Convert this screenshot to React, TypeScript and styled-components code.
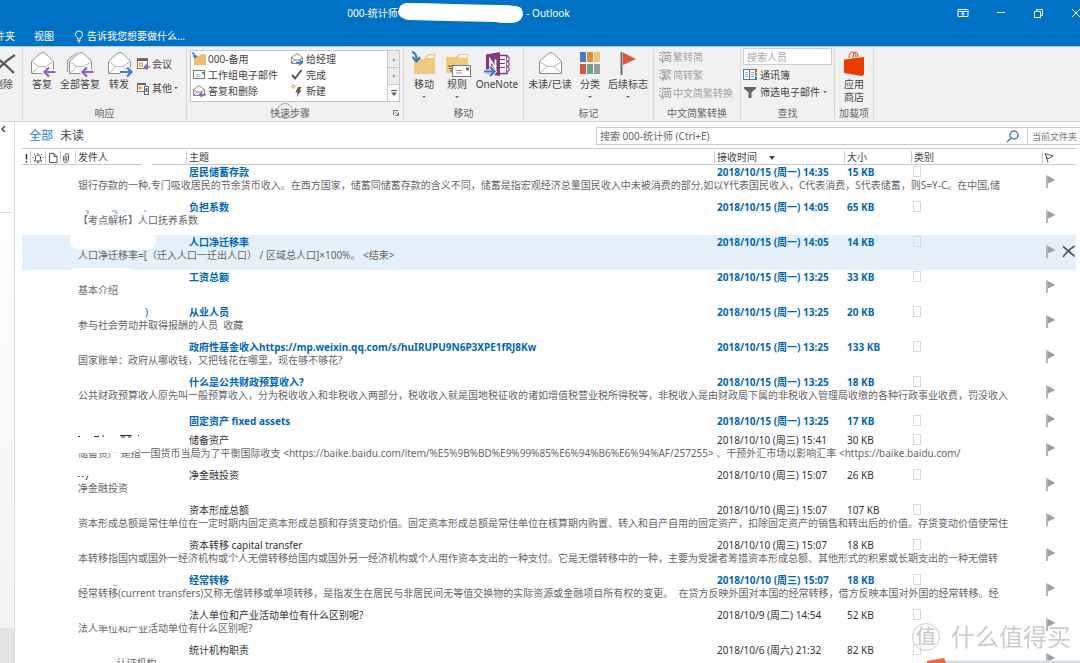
import React from "react";
import styled, { createGlobalStyle, css } from "styled-components";

const blue = "#0072c6";
const purple = "#9262b8";
const arrowBlue = "#3d7dbd";
const line = "#c6c9d1";
const ink = "#444444";

const GlobalStyle = createGlobalStyle`
  * { box-sizing: border-box; }
  html, body, #root { height: 100%; }
  body {
    margin: 0;
    overflow: hidden;
    background: #ffffff;
    color: ${ink};
    font-family: "Noto Sans", "Noto Sans CJK SC", sans-serif;
    font-size: 10px;
    line-height: 13px;
    text-spacing-trim: space-all;
  }
  button, input, select {
    font: inherit;
    color: inherit;
    border: 0;
    padding: 0;
    margin: 0;
    background: none;
    border-radius: 0;
  }
  svg { display: block; flex: none; }
`;

/* ---------- window frame ---------- */

const Window = styled.div`
  height: 100vh;
  display: flex;
  flex-direction: column;
  overflow: hidden;
`;

const TitleBar = styled.header`
  display: flex;
  flex: none;
  height: 26px;
  background: ${blue};
  color: #ffffff;
`;

const Title = styled.h1`
  flex: 1;
  display: flex;
  align-items: center;
  justify-content: center;
  margin: 0;
  font-size: 10px;
  font-weight: 400;
  white-space: pre;
`;

const WindowControls = styled.div`
  display: flex;
  width: 163px;
  padding-left: 27px;
  overflow: hidden;
`;

const WindowButton = styled.button`
  flex: none;
  width: 38px;
  display: flex;
  align-items: center;
  justify-content: center;
`;

const TabBar = styled.nav`
  display: flex;
  flex: none;
  align-items: center;
  height: 21px;
  background: ${blue};
  color: #ffffff;
  border-bottom: 1px solid #a9cdea;
`;

const RibbonTab = styled.button<{ $width: number }>`
  display: flex;
  flex: none;
  width: ${(p) => p.$width}px;
  justify-content: flex-end;
  overflow: hidden;
  white-space: nowrap;
`;

const TellMe = styled.button`
  display: flex;
  align-items: center;
  gap: 3px;
  margin-left: 20px;
  white-space: nowrap;
`;

/* ---------- ribbon ---------- */

const Ribbon = styled.div`
  display: flex;
  flex: none;
  height: 75px;
  padding: 1px 0 1px;
  background: #f1f1f1;
  border-bottom: 1px solid #d5d5d5;
`;

const Group = styled.section<{ $width: number }>`
  display: flex;
  flex: none;
  flex-direction: column;
  width: ${(p) => p.$width}px;
  border-right: 1px solid #dadada;
  overflow: hidden;
`;

const GroupBody = styled.div<{ $end?: boolean; $pad?: number; $top?: number }>`
  display: flex;
  flex: 1;
  min-height: 0;
  padding: ${(p) => p.$top ?? 2}px 0 0 ${(p) => p.$pad ?? 3}px;
  ${(p) => p.$end && css`justify-content: flex-end; padding-right: 6px;`}
`;

const GroupLabel = styled.div`
  display: flex;
  flex: none;
  align-items: center;
  justify-content: center;
  height: 14px;
  color: #666666;
  white-space: nowrap;
`;

const Launcher = styled.button`
  padding-right: 4px;
`;

const LabelText = styled.span`
  position: relative;
  margin: 0 auto;
`;

const PointerRing = styled.span`
  position: absolute;
  left: 7px;
  top: -4px;
  width: 16px;
  height: 16px;
  border: 1px solid #a9a6b4;
  border-radius: 50%;
`;

const BigButton = styled.button<{ $width: number }>`
  display: flex;
  flex: none;
  flex-direction: column;
  align-items: center;
  justify-content: flex-start;
  width: ${(p) => p.$width}px;
  white-space: nowrap;
`;

const Caret = styled.span<{ $spaced?: boolean }>`
  width: 0;
  height: 0;
  border: 2px solid transparent;
  border-top-color: #666666;
  border-bottom: 0;
  ${(p) => p.$spaced && css`margin-top: 5px;`}
`;

const Stack = styled.div<{ $gap: number; $top: number }>`
  display: flex;
  flex-direction: column;
  align-items: flex-start;
  gap: ${(p) => p.$gap}px;
  padding-top: ${(p) => p.$top}px;
`;

const SmallButton = styled.button<{ $gap?: number }>`
  display: flex;
  align-items: center;
  gap: ${(p) => p.$gap ?? 2}px;
  height: 14px;
  white-space: nowrap;
  &:disabled { color: #a3a3a3; }
`;

const Gallery = styled.div`
  display: flex;
  width: 210px;
  height: 52px;
  background: #ffffff;
  border: 1px solid #c8c8c8;
`;

const GallerySteps = styled.div`
  flex: 1;
  display: grid;
  grid-template-columns: 98px 1fr;
  grid-auto-rows: 16px;
  padding: 1px 0 0 1px;
`;

const GalleryScroll = styled.div`
  display: flex;
  flex-direction: column;
  width: 12px;
  border-left: 1px solid #c8c8c8;
`;

const ScrollButton = styled.button<{ $active?: boolean }>`
  flex: 1;
  display: flex;
  align-items: center;
  justify-content: center;
  background: ${(p) => (p.$active ? "#ffffff" : "#ececec")};
  & + & { border-top: 1px solid #c8c8c8; }
`;

const PeopleSearch = styled.input`
  width: 89px;
  height: 17px;
  padding: 0 3px;
  background: #ffffff;
  border: 1px solid #cccccc;
  &::placeholder { color: #a6a6a6; opacity: 1; }
`;

/* ---------- body ---------- */

const Main = styled.main`
  display: flex;
  flex: 1;
  min-height: 0;
`;

const FolderRail = styled.aside`
  display: flex;
  flex: none;
  flex-direction: column;
  width: 15px;
  border-right: 1px solid #dcdcdc;
  background: linear-gradient(#ffffff, #f3f3f3);
`;

const RailTop = styled.div`
  height: 91px;
  margin-right: 3px;
  padding: 3px 0 0 1px;
  border-bottom: 1px solid #dcdcdc;
`;

const RailBottom = styled.div`
  height: 35px;
  margin-top: auto;
  background: #e3e3e3;
`;

const MessagePane = styled.section`
  flex: 1;
  min-width: 0;
  padding: 5px 0 0 7px;
`;

const PaneTop = styled.div`
  display: flex;
  height: 21px;
`;

const FilterButton = styled.button<{ $active?: boolean }>`
  margin-left: 7px;
  height: 18px;
  font-size: 12px;
  line-height: 18px;
  color: ${(p) => (p.$active ? "#1e82d2" : ink)};
`;

const SearchBox = styled.form`
  display: flex;
  align-items: center;
  width: 484px;
  height: 18px;
  margin-left: auto;
  border: 1px solid ${line};
  border-right: 0;
`;

const SearchInput = styled.input`
  flex: 1;
  min-width: 0;
  padding-left: 3px;
  &::placeholder { color: #666666; opacity: 1; }
`;

const SearchButton = styled.button`
  padding: 0 8px 0 4px;
`;

const ScopeSelect = styled.select`
  appearance: none;
  width: 53px;
  height: 16px;
  padding-left: 4px;
  border-left: 1px solid ${line};
  color: #777777;
  font-size: 9px;
`;

const Mail = styled.table`
  width: calc(100% - 4px);
  table-layout: fixed;
  border-collapse: separate;
  border-spacing: 0;
`;

const HeadCell = styled.th<{ $plain?: boolean; $left?: number }>`
  height: 17px;
  padding: 2px 0 0 ${(p) => p.$left ?? 1}px;
  border-top: 1px solid ${line};
  border-bottom: 1px solid ${line};
  text-align: left;
  font-weight: 400;
  white-space: nowrap;
  background: ${(p) =>
    p.$plain ? "none" : `linear-gradient(${line}, ${line}) right center / 1px 12px no-repeat`};
`;

const HeadInner = styled.span`
  display: flex;
  align-items: center;
  gap: 12px;
  height: 13px;
`;

const LineGap = styled.span`
  position: absolute;
  left: 64px;
  top: 12px;
  width: 10px;
  height: 3px;
  background: #ffffff;
`;

const HeadAnchor = styled.span`
  position: relative;
  display: block;
`;

const Message = styled.tbody<{ $unread?: boolean; $selected?: boolean }>`
  color: ${(p) => (p.$unread ? "#0067b5" : "#333333")};
  font-weight: ${(p) => (p.$unread ? 700 : 400)};
  background: ${(p) => (p.$selected ? "#e4f1fa" : "none")};
`;

const Cell = styled.td<{ $height?: number }>`
  height: ${(p) => p.$height ?? 14}px;
  padding: ${(p) => (p.$height ? 5 : 1)}px 0 0 2px;
  vertical-align: top;
  white-space: nowrap;
`;

const CategoryCell = styled(Cell)`
  padding: ${(p) => (p.$height ? 5 : 1)}px 0 0 1px;
`;

const PreviewCell = styled.td`
  height: 21px;
  padding: 0 0 0 2px;
  vertical-align: top;
  overflow: hidden;
  white-space: pre;
  color: #666666;
  font-weight: 400;
`;

const IconCell = styled.td<{ $left: number }>`
  padding: 0 0 2px ${(p) => p.$left}px;
  vertical-align: middle;
`;

const CategoryBox = styled.span`
  display: block;
  width: 8px;
  height: 11px;
  border: 1px solid #d9d9d9;
`;

const Anchor = styled.div`
  position: relative;
  height: 13px;
`;

const Smudge = styled.svg<{ $left: number; $top: number }>`
  position: absolute;
  left: ${(p) => p.$left}px;
  top: ${(p) => p.$top}px;
`;

const SenderTail = styled.div`
  padding-left: 67px;
  font-weight: 400;
`;

const Watermark = styled.div`
  position: fixed;
  right: 9px;
  bottom: 10px;
  display: flex;
  align-items: center;
  gap: 11px;
  color: rgba(190, 190, 190, 0.8);
  font-size: 24px;
  line-height: 32px;
  text-shadow: 1px 1px 1px rgba(255, 255, 255, 0.9);
  pointer-events: none;
`;

const WatermarkBadge = styled.span`
  width: 28px;
  height: 28px;
  border: 1px solid rgba(190, 190, 190, 0.8);
  border-radius: 50%;
  font-size: 20px;
  line-height: 25px;
  text-align: center;
  font-weight: 500;
`;

const Footing = styled.div`
  position: fixed;
  right: 0;
  bottom: 0;
  width: 153px;
`;

/* ---------- icons ---------- */

const Envelope = ({ double = false }: { double?: boolean }) => (
  <>
    {double && <path d="M1.5 22V10L11 2.5" fill="none" stroke="#999" />}
    <path d="M3.5 11.5 Q13 2 15 2.5 Q17 2 25.5 11.5V23.500H3.500Z" fill="#fff" stroke="#8d8d8d" />
    <path d="M3.500 11.500L11 16.500H18L25.500 11.500M3.500 23.500L11 16.500M18 16.500L25.500 23.500" fill="none" stroke="#b5b5b5" />
  </>
);

const ReplyIcon = ({ double = false }: { double?: boolean }) => (
  <svg width="28" height="28" viewBox="0 0 28 28">
    <Envelope double={double} />
    <path d="M27 22H17M20.500 17.500L16 22L20.500 26.500" fill="none" stroke="#f1f1f1" strokeWidth="5" />
    <path d="M27.500 22H17M21 17.500L16.500 22L21 26.500" fill="none" stroke={purple} strokeWidth="2.200" />
  </svg>
);

const ForwardIcon = () => (
  <svg width="28" height="28" viewBox="0 0 28 28">
    <Envelope />
    <path d="M15 22H26M22 17.500L26.500 22L22 26.500" fill="none" stroke="#f1f1f1" strokeWidth="5" />
    <path d="M15 22H26M22 17.500L26.500 22L22 26.500" fill="none" stroke={arrowBlue} strokeWidth="2.200" />
  </svg>
);

const ReadIcon = () => (
  <svg width="28" height="28" viewBox="0 0 28 28">
    <Envelope />
  </svg>
);

const DeleteBigIcon = () => (
  <svg width="28" height="28" viewBox="0 0 28 28">
    <path d="M5 6Q16 14 25 23M26 5Q14 12 5 24" fill="none" stroke="#5c5c5c" strokeWidth="2.400" />
  </svg>
);

const MoveIcon = () => (
  <svg width="28" height="28" viewBox="0 0 28 28">
    <path d="M4 9H14L17 5H25V24H4Z" fill="#efc982" />
    <path d="M16 8L18 4.500H25V7" fill="none" stroke="#efc982" />
    <path d="M17 8L18.500 5.500H24V8Z" fill="#fff" />
    <path d="M2 2Q7 3 6.500 11M2.500 7L6.500 11.500L10 7" fill="none" stroke={arrowBlue} strokeWidth="2.200" />
  </svg>
);

const RulesIcon = () => (
  <svg width="28" height="28" viewBox="0 0 28 28">
    <path d="M3 7H13L16 4H25V23H3Z" fill="#efc982" />
    <path d="M15.500 7L17.500 5H24V7.500H15.500Z" fill="#fff" />
    <path d="M5 16H9M6 18.500H9M7 21H9" stroke="#555" />
    <rect x="9.500" y="15.500" width="18" height="11" fill="#fff" stroke="#777" />
    <rect x="23" y="17.500" width="3" height="3" fill={arrowBlue} />
    <path d="M13 20.500H19M13 23H19" stroke="#999" />
  </svg>
);

const OneNoteIcon = () => (
  <svg width="28" height="28" viewBox="0 0 28 28">
    <rect x="15" y="5.500" width="9" height="18" fill="#fff" stroke="#80397b" strokeWidth="1.500" />
    <path d="M17 9.500H22M17 13.500H22M17 17.500H22" stroke="#80397b" />
    <path d="M24 7H26V11H24M24 12H26V16H24M24 17H26V21H24" fill="#fff" stroke="#80397b" />
    <path d="M3 4.500L17 2V26L3 23.500Z" fill="#80397b" />
    <path d="M7 18V9.500L12.500 18V9.500" fill="none" stroke="#fff" strokeWidth="1.800" />
    <path d="M1 21.500H11M7 17L11.500 21.500L7 26" fill="none" stroke="#f1f1f1" strokeWidth="4" />
    <path d="M1 21.500H11M7 17L11.500 21.500L7 26" fill="none" stroke={arrowBlue} strokeWidth="2.200" />
  </svg>
);

const CategorizeIcon = () => {
  const colors = ["#3f7fbd", "#e2893a", "#efc27a", "#d5573b", "#62a58b", "#9a9a9a"];
  return (
    <svg width="28" height="28" viewBox="0 0 28 28">
      {colors.map((c, i) => (
        <rect key={c} x={4 + (i % 3) * 7} y={i < 3 ? 2 : 14} width="6" height="10" fill={c} />
      ))}
    </svg>
  );
};

const FollowUpIcon = () => (
  <svg width="28" height="28" viewBox="0 0 28 28">
    <path d="M7.500 2V25" stroke="#6b6b6b" strokeWidth="2" />
    <path d="M9 2.500L22 9L9 15Z" fill="#d9573b" />
  </svg>
);

const StoreIcon = () => (
  <svg width="28" height="28" viewBox="0 0 28 28">
    <path d="M9 8Q9 2 13 2Q16 2 16 7M13 8Q13 3 15 2Q18 2 18 7" fill="none" stroke="#eb3c00" />
    <path d="M4 9.500L24 7V24.500L22 26L4 23Z" fill="#eb3c00" />
  </svg>
);

const MeetingIcon = () => (
  <svg width="14" height="14" viewBox="0 0 14 14">
    <rect x="1.500" y="1.500" width="10" height="10" fill="#fff" stroke="#777" />
    <path d="M1 3H12" stroke="#666" strokeWidth="2" />
    <rect x="3.500" y="6" width="3" height="3" fill="none" stroke="#e8833a" />
    <path d="M14 10H8.500M11 7.500L8.500 10L11 12.500" fill="none" stroke={purple} strokeWidth="1.500" />
  </svg>
);

const MoreIcon = () => (
  <svg width="14" height="14" viewBox="0 0 14 14">
    <rect x="1.500" y="2.500" width="8" height="8" fill="#fff" stroke="#777" />
    <path d="M1 3H10" stroke="#666" strokeWidth="2" />
    <rect x="3" y="6" width="2" height="2" fill="none" stroke="#e8833a" />
    <rect x="8.500" y="5.500" width="4" height="8" fill="#fff" stroke="#666" />
    <rect x="9.500" y="7" width="2" height="4" fill={arrowBlue} />
  </svg>
);

const FolderStepIcon = () => (
  <svg width="14" height="14" viewBox="0 0 14 14">
    <path d="M2 4H7L9 2H14V13H2Z" fill="#e9be74" />
    <path d="M0 1Q3 1 3 5M1 3.500L3 5.500L5 3.500" fill="none" stroke={arrowBlue} strokeWidth="1.300" />
  </svg>
);

const TeamMailIcon = () => (
  <svg width="14" height="14" viewBox="0 0 14 14">
    <rect x="1.500" y="2.500" width="11" height="8" fill="#fff" stroke="#777" />
    <rect x="10" y="4" width="2" height="2" fill={arrowBlue} />
    <path d="M4 6.500H8M4 8.500H8" stroke="#bbb" />
  </svg>
);

const StepEnvelopeIcon = ({ forward = false }: { forward?: boolean }) => (
  <svg width="14" height="14" viewBox="0 0 14 14">
    <path d="M1.500 5.500L7 1.500L12.500 5.500V11.500H1.500ZM1.500 5.500L5 8H9L12.500 5.500M1.500 11.500L5 8" fill="#fff" stroke="#8a8a8a" />
    {forward ? (
      <path d="M6 10.500H12M9.500 8L12 10.500L9.500 13" fill="none" stroke={arrowBlue} strokeWidth="1.500" />
    ) : (
      <path d="M14 10.500H7.500M10 8L7.500 10.500L10 13" fill="none" stroke={purple} strokeWidth="1.500" />
    )}
  </svg>
);

const CheckIcon = () => (
  <svg width="14" height="14" viewBox="0 0 14 14">
    <path d="M2 7L5 10.500L11.500 2" fill="none" stroke="#555" strokeWidth="2" />
  </svg>
);

const NewStepIcon = () => (
  <svg width="14" height="14" viewBox="0 0 14 14">
    <path d="M2 1L5 4M5 1L2 4M3.500 0V5M1 2.500H6" stroke="#f0b878" />
    <rect x="3" y="2" width="1" height="1" fill="#fff" />
    <path d="M8 3H11.500L9.500 6.500H11.500L6.500 13L7.800 8.500H5.500Z" fill="#555" />
  </svg>
);

const ConvertIcon = ({ glyph }: { glyph: string }) => (
  <svg width="14" height="14" viewBox="0 0 14 14" fill="#999">
    <text x="2" y="11" fontSize="11">{glyph}</text>
    <path d="M0.500 2.500H2.500M0.500 5.500H2M0.500 8Q0.500 11.500 4.500 11.500M3 9.500L5 11.500L3 13.500" fill="none" stroke="#999" />
  </svg>
);

const AddressBookIcon = () => (
  <svg width="14" height="14" viewBox="0 0 14 14">
    <rect x="0.500" y="1.500" width="12" height="10" fill="#fff" stroke={arrowBlue} />
    <path d="M6.500 2V12" stroke="#777" />
    <path d="M2 4.500H5M2 6.500H5M2 8.500H5M8 4.500H11M8 6.500H11M8 8.500H11" stroke="#aaa" />
    <path d="M13 1V4" stroke="#d9573b" strokeWidth="2" />
    <path d="M13 5V8" stroke="#62a58b" strokeWidth="2" />
    <path d="M13 9V12" stroke={arrowBlue} strokeWidth="2" />
  </svg>
);

const FilterIcon = () => (
  <svg width="14" height="14" viewBox="0 0 14 14">
    <path d="M1 2H13V3.500L8.500 7.500V13H5.500V7.500L1 3.500Z" fill="#666" />
  </svg>
);

const BulbIcon = () => (
  <svg width="10" height="13" viewBox="0 0 10 13" fill="none" stroke="#fff">
    <path d="M3.500 9V8Q1.500 6.500 1.500 4.500A3.500 3.500 0 0 1 8.500 4.500Q8.500 6.500 6.500 8V9ZM3.500 10.500H6.500M4 12H6" />
  </svg>
);

const Flag = () => (
  <svg width="10" height="13" viewBox="0 0 10 13">
    <path d="M1 0.500V13" stroke="#b5b5b5" strokeWidth="2" />
    <path d="M2 1L9.500 5L2 8.500Z" fill="#9f9f9f" />
  </svg>
);

const WindowIcon = ({ d }: { d: string }) => (
  <svg width="12" height="10" viewBox="0 0 12 10" fill="none" stroke="#fff">
    <path d={d} />
  </svg>
);

/* ---------- data ---------- */

type Mark = "flecks" | "paren" | "cover" | "coverEdge" | "inkFlecks" | "dots" | "fewFlecks";

interface MessageData {
  subject: string;
  preview?: string;
  received: string;
  size: string;
  unread?: boolean;
  selected?: boolean;
  mark?: Mark;
  previewCover?: "head" | "middle";
}

const messages: MessageData[] = [
  { subject: "居民储蓄存款", received: "2018/10/15 (周一) 14:35", size: "15 KB", unread: true, preview: "银行存款的一种,专门吸收居民的节余货币收入。在西方国家，储蓄同储蓄存款的含义不同，储蓄是指宏观经济总量国民收入中未被消费的部分,如以Y代表国民收入，C代表消费，S代表储蓄，则S=Y-C。在中国,储" },
  { subject: "负担系数", received: "2018/10/15 (周一) 14:05", size: "65 KB", unread: true, mark: "flecks", preview: "【考点解析】人口抚养系数" },
  { subject: "人口净迁移率", received: "2018/10/15 (周一) 14:05", size: "14 KB", unread: true, selected: true, mark: "cover", preview: "人口净迁移率=[（迁入人口一迁出人口） / 区域总人口]×100%。 <结束>" },
  { subject: "工资总额", received: "2018/10/15 (周一) 13:25", size: "33 KB", unread: true, mark: "coverEdge", preview: "基本介绍" },
  { subject: "从业人员", received: "2018/10/15 (周一) 13:25", size: "20 KB", unread: true, mark: "paren", preview: "参与社会劳动并取得报酬的人员  收藏" },
  { subject: "政府性基金收入https://mp.weixin.qq.com/s/huIRUPU9N6P3XPE1fRJ8Kw", received: "2018/10/15 (周一) 13:25", size: "133 KB", unread: true, preview: "国家账单：政府从哪收钱，又把钱花在哪里，现在够不够花?" },
  { subject: "什么是公共财政预算收入?", received: "2018/10/15 (周一) 13:25", size: "18 KB", unread: true, preview: "公共财政预算收人原先叫一般预算收入，分为税收收入和非税收入两部分，税收收入就是国地税征收的诸如增值税营业税所得税等，非税收入是由财政局下属的非税收入管理局收缴的各种行政事业收费，罚没收入" },
  { subject: "固定资产 fixed assets", received: "2018/10/15 (周一) 13:25", size: "17 KB", unread: true },
  { subject: "储备资产", received: "2018/10/10 (周三) 15:41", size: "30 KB", mark: "inkFlecks", previewCover: "head", preview: "储备资产 是指一国货币当局为了平衡国际收支 <https://baike.baidu.com/item/%E5%9B%BD%E9%99%85%E6%94%B6%E6%94%AF/257255> 、干预外汇市场以影响汇率 <https://baike.baidu.com/" },
  { subject: "净金融投资", received: "2018/10/10 (周三) 15:07", size: "26 KB", mark: "dots", preview: "净金融投资" },
  { subject: "资本形成总额", received: "2018/10/10 (周三) 15:07", size: "107 KB", preview: "资本形成总额是常住单位在一定时期内固定资本形成总额和存货变动价值。固定资本形成总额是常住单位在核算期内购置、转入和自产自用的固定资产，扣除固定资产的销售和转出后的价值。存货变动价值使常住" },
  { subject: "资本转移 capital transfer", received: "2018/10/10 (周三) 15:07", size: "18 KB", preview: "本转移指国内或国外一经济机构或个人无偿转移给国内或国外另一经济机构或个人用作资本支出的一种支付。它是无偿转移中的一种，主要为受援者筹措资本形成总额、其他形式的积累或长期支出的一种无偿转" },
  { subject: "经常转移", received: "2018/10/10 (周三) 15:07", size: "18 KB", unread: true, mark: "fewFlecks", preview: "经常转移(current transfers)又称无偿转移或单项转移，是指发生在居民与非居民间无等值交换物的实际资源或金融项目所有权的变更。  在贷方反映外国对本国的经常转移，借方反映本国对外国的经常转移。经" },
  { subject: "法人单位和产业活动单位有什么区别呢?", received: "2018/10/9 (周二) 14:54", size: "52 KB", previewCover: "middle", preview: "法人单位和产业活动单位有什么区别呢?" },
  { subject: "统计机构职责", received: "2018/10/6 (周六) 21:32", size: "82 KB", preview: "           　认证机构" },
];

const SenderMark = ({ mark }: { mark?: Mark }) => {
  switch (mark) {
    case "flecks":
      return (
        <Anchor>
          <Smudge $left={6} $top={9} width="66" height="4" viewBox="0 0 66 4">
            <path d="M2 1H5M3 3H5M28 1H33M31 3H34M40 1H41M60 1H62" stroke="#4b8fca" />
          </Smudge>
        </Anchor>
      );
    case "fewFlecks":
      return (
        <Anchor>
          <Smudge $left={6} $top={10} width="40" height="3" viewBox="0 0 40 3">
            <path d="M3 1.500H5M29 1.500H33" stroke="#7fb2dd" />
          </Smudge>
        </Anchor>
      );
    case "inkFlecks":
      return (
        <Anchor>
          <Smudge $left={0} $top={0} width="64" height="4" viewBox="0 0 64 4">
            <path d="M0 2.500H2M16 2.500H21M25 1V3M42 1.500H54M43 3H47M50 3H53M60 1.500H61" stroke="#333" />
          </Smudge>
        </Anchor>
      );
    case "dots":
      return (
        <Anchor>
          <Smudge $left={0} $top={5} width="12" height="7" viewBox="0 0 12 7">
            <path d="M0 2.500H1.500M4 2.500H5.500M10 2L8 6" stroke="#333" />
          </Smudge>
        </Anchor>
      );
    case "cover":
      return (
        <Anchor>
          <Smudge $left={-8} $top={-1} width="86" height="15" viewBox="0 0 86 15">
            <path d="M0 0H84Q86 4 86 7Q85 13 80 14.500Q40 15 8 14Q0 12 0 7Z" fill="#fff" />
          </Smudge>
        </Anchor>
      );
    case "coverEdge":
      return (
        <Anchor>
          <Smudge $left={-12} $top={-3} width="72" height="4" viewBox="0 0 72 4">
            <path d="M0 4Q4 0 16 0H58Q68 1 72 4Z" fill="#fff" />
          </Smudge>
        </Anchor>
      );
    case "paren":
      return <SenderTail>)</SenderTail>;
    default:
      return null;
  }
};

const PreviewCover = ({ kind }: { kind: "head" | "middle" }) =>
  kind === "head" ? (
    <Smudge $left={-2} $top={0} width="64" height="7" viewBox="0 0 64 7">
      <path d="M0 0H64L60 4Q40 7 0 6Z" fill="#fff" />
    </Smudge>
  ) : (
    <Smudge $left={20} $top={0} width="56" height="5" viewBox="0 0 56 5">
      <path d="M0 0H56L52 3Q30 6 0 3Z" fill="#fff" />
    </Smudge>
  );

const MessageRows = ({ m }: { m: MessageData }) => {
  const height = m.preview ? undefined : 23;
  const span = m.preview ? 2 : 1;
  return (
    <Message $unread={m.unread} $selected={m.selected}>
      <tr>
        <Cell colSpan={4} rowSpan={span} />
        <Cell $height={height}><SenderMark mark={m.mark} /></Cell>
        <Cell $height={height}>{m.subject}</Cell>
        <Cell $height={height}>{m.received}</Cell>
        <Cell $height={height}>{m.size}</Cell>
        <CategoryCell $height={height}><CategoryBox /></CategoryCell>
        <IconCell rowSpan={span} $left={3}><Flag /></IconCell>
        <IconCell rowSpan={span} $left={2}>
          {m.selected && (
            <svg width="13" height="13" viewBox="0 0 13 13">
              <path d="M1 1.500Q7 6 12.500 11.500M12.500 1Q6 5 1 12" fill="none" stroke="#555" strokeWidth="1.600" />
            </svg>
          )}
        </IconCell>
      </tr>
      {m.preview && (
        <tr>
          <PreviewCell colSpan={5}>
            <Anchor>
              {m.preview}
              {m.previewCover && <PreviewCover kind={m.previewCover} />}
            </Anchor>
          </PreviewCell>
        </tr>
      )}
    </Message>
  );
};

/* ---------- page ---------- */

export default function App() {
  return (
    <Window>
      <GlobalStyle />
      <TitleBar>
        <Title>
          000-统计师
          <svg width="126" height="20" viewBox="0 0 126 20">
            <path d="M8 0Q30 0 54 1L100 2Q120 2 123 5Q127 11 123 16Q120 20 112 20Q100 20 98 19L50 18L10 17Q1 15 0 9Q1 1 8 0Z" fill="#fff" />
          </svg>
          {" - Outlook"}
        </Title>
        <WindowControls>
          <WindowButton aria-label="功能区显示选项"><WindowIcon d="M1 1.500H11V8.500H1ZM1 3.500H11M6 8V4.500M4 6.500L6 4.500L8 6.500" /></WindowButton>
          <WindowButton aria-label="最小化"><WindowIcon d="M2 4.500H10" /></WindowButton>
          <WindowButton aria-label="还原"><WindowIcon d="M1.500 3.500H7.500V9.500H1.500ZM3.500 3V1.500H9.500V7.500H8" /></WindowButton>
          <WindowButton aria-label="关闭"><WindowIcon d="M1 1L9 9M9 1L1 9" /></WindowButton>
        </WindowControls>
      </TitleBar>
      <TabBar>
        <RibbonTab $width={15}>文件夹</RibbonTab>
        <RibbonTab $width={39}>视图</RibbonTab>
        <TellMe><BulbIcon />告诉我您想要做什么...</TellMe>
      </TabBar>

      <Ribbon>
        <Group $width={23}>
          <GroupBody $end>
            <BigButton $width={26}><DeleteBigIcon />删除</BigButton>
          </GroupBody>
          <GroupLabel />
        </Group>

        <Group $width={164}>
          <GroupBody>
            <BigButton $width={32}><ReplyIcon />答复</BigButton>
            <BigButton $width={44}><ReplyIcon double />全部答复</BigButton>
            <BigButton $width={34}><ForwardIcon />转发</BigButton>
            <Stack $gap={10} $top={7}>
              <SmallButton><MeetingIcon />会议</SmallButton>
              <SmallButton><MoreIcon />其他<Caret /></SmallButton>
            </Stack>
          </GroupBody>
          <GroupLabel>响应</GroupLabel>
        </Group>

        <Group $width={217}>
          <GroupBody>
            <Gallery>
              <GallerySteps>
                <SmallButton><FolderStepIcon />000-备用</SmallButton>
                <SmallButton><StepEnvelopeIcon forward />给经理</SmallButton>
                <SmallButton><TeamMailIcon />工作组电子邮件</SmallButton>
                <SmallButton><CheckIcon />完成</SmallButton>
                <SmallButton><StepEnvelopeIcon />答复和删除</SmallButton>
                <SmallButton><NewStepIcon />新建</SmallButton>
              </GallerySteps>
              <GalleryScroll>
                <ScrollButton aria-label="上一行">
                  <svg width="4" height="3"><path d="M0 3L2 0L4 3Z" fill="#aaa" /></svg>
                </ScrollButton>
                <ScrollButton aria-label="下一行">
                  <svg width="4" height="3"><path d="M0 0L2 3L4 0Z" fill="#aaa" /></svg>
                </ScrollButton>
                <ScrollButton $active aria-label="更多">
                  <svg width="6" height="6"><path d="M0 0H6V1H0ZM0 2.500H6L3 6Z" fill="#555" /></svg>
                </ScrollButton>
              </GalleryScroll>
            </Gallery>
          </GroupBody>
          <GroupLabel>
            <LabelText>快速步骤<PointerRing /></LabelText>
            <Launcher aria-label="管理快速步骤">
              <svg width="6" height="6" viewBox="0 0 6 6" fill="none" stroke="#777">
                <path d="M0.500 5V0.500H5M2.500 2.500L5 5M5.500 2.500V5.500H2.500" />
              </svg>
            </Launcher>
          </GroupLabel>
        </Group>

        <Group $width={120}>
          <GroupBody>
            <BigButton $width={34}><MoveIcon />移动<Caret $spaced /></BigButton>
            <BigButton $width={32}><RulesIcon />规则<Caret $spaced /></BigButton>
            <BigButton $width={48}><OneNoteIcon />OneNote</BigButton>
          </GroupBody>
          <GroupLabel>移动</GroupLabel>
        </Group>

        <Group $width={130}>
          <GroupBody>
            <BigButton $width={46}><ReadIcon />未读/已读</BigButton>
            <BigButton $width={34}><CategorizeIcon />分类<Caret $spaced /></BigButton>
            <BigButton $width={42}><FollowUpIcon />后续标志<Caret $spaced /></BigButton>
          </GroupBody>
          <GroupLabel>标记</GroupLabel>
        </Group>

        <Group $width={87}>
          <GroupBody $pad={5}>
            <Stack $gap={4} $top={0}>
              <SmallButton $gap={0} disabled><ConvertIcon glyph="简" />繁转简</SmallButton>
              <SmallButton $gap={0} disabled><ConvertIcon glyph="繁" />简转繁</SmallButton>
              <SmallButton $gap={0} disabled><ConvertIcon glyph="简" />中文简繁转换</SmallButton>
            </Stack>
          </GroupBody>
          <GroupLabel>中文简繁转换</GroupLabel>
        </Group>

        <Group $width={94}>
          <GroupBody $pad={2} $top={0}>
            <Stack $gap={3} $top={0}>
              <PeopleSearch aria-label="搜索人员" placeholder="搜索人员" />
              <SmallButton $gap={3}><AddressBookIcon />通讯簿</SmallButton>
              <SmallButton $gap={3}><FilterIcon />筛选电子邮件<Caret /></SmallButton>
            </Stack>
          </GroupBody>
          <GroupLabel>查找</GroupLabel>
        </Group>

        <Group $width={39}>
          <GroupBody>
            <BigButton $width={32}>
              <StoreIcon />
              <span>应用<br />商店</span>
            </BigButton>
          </GroupBody>
          <GroupLabel>加载项</GroupLabel>
        </Group>
      </Ribbon>

      <Main>
        <FolderRail>
          <RailTop>
            <svg width="5" height="8" viewBox="0 0 5 8"><path d="M4 1L1 4L4 7" fill="none" stroke="#444" strokeWidth="1.500" /></svg>
          </RailTop>
          <RailBottom />
        </FolderRail>

        <MessagePane>
          <PaneTop>
            <FilterButton $active>全部</FilterButton>
            <FilterButton>未读</FilterButton>
            <SearchBox>
              <SearchInput aria-label="搜索" placeholder="搜索 000-统计师 (Ctrl+E)" />
              <SearchButton type="button" aria-label="搜索">
                <svg width="13" height="13" viewBox="0 0 13 13" fill="none" stroke={arrowBlue} strokeWidth="1.500">
                  <circle cx="8" cy="5" r="4" /><path d="M5 8L1 12" />
                </svg>
              </SearchButton>
              <ScopeSelect aria-label="搜索范围"><option>当前文件夹</option></ScopeSelect>
            </SearchBox>
          </PaneTop>

          <Mail>
            <colgroup>
              <col style={{ width: 9 }} />
              <col style={{ width: 15 }} />
              <col style={{ width: 15 }} />
              <col style={{ width: 15 }} />
              <col style={{ width: 111 }} />
              <col />
              <col style={{ width: 130 }} />
              <col style={{ width: 67 }} />
              <col style={{ width: 131 }} />
              <col style={{ width: 17 }} />
              <col style={{ width: 16 }} />
            </colgroup>
            <thead>
              <tr>
                <HeadCell aria-label="重要性" $left={3}>
                  <svg width="3" height="10"><path d="M1.500 1V6.500M1.500 8V9.500" stroke="#333" strokeWidth="1.500" /></svg>
                </HeadCell>
                <HeadCell aria-label="提醒">
                  <svg width="12" height="12" viewBox="0 0 12 12" fill="none" stroke="#555">
                    <path d="M2 9H10L8.500 7.500V5Q8.500 3 6 3Q3.500 3 3.500 5V7.500ZM5 10.500H7M6 1V2.500M2 2L3 3M10 2L9 3M0.500 5.500H1.500M10.500 5.500H11.500" />
                  </svg>
                </HeadCell>
                <HeadCell aria-label="图标" $left={3}>
                  <svg width="9" height="12" viewBox="0 0 9 12" fill="none" stroke="#555"><path d="M0.500 1.500H5L8 4.500V10.500H0.500ZM5 1.500V4.500H8" /></svg>
                </HeadCell>
                <HeadCell aria-label="附件" $left={1}>
                  <svg width="8" height="12" viewBox="0 0 8 12" fill="none" stroke="#666"><path d="M1.500 4V8.500Q1.500 10.500 3.500 10.500Q6.500 10.500 6.500 7V3Q6.500 1.500 5 1.500Q3 1.500 3 4V8Q4.500 9.500 4.800 7V4" /></svg>
                </HeadCell>
                <HeadCell $left={2}><HeadAnchor>发件人<LineGap /></HeadAnchor></HeadCell>
                <HeadCell $left={2}>主题</HeadCell>
                <HeadCell $left={2}>
                  <HeadInner>
                    接收时间
                    <svg width="6" height="4"><path d="M0 0H6L3 4Z" fill="#444" /></svg>
                  </HeadInner>
                </HeadCell>
                <HeadCell $left={2}>大小</HeadCell>
                <HeadCell $left={2}>类别</HeadCell>
                <HeadCell $plain colSpan={2} aria-label="标志状态">
                  <svg width="10" height="10" viewBox="0 0 10 10" fill="none" stroke="#555"><path d="M1 0.500L9 3L3.500 6ZM2 3L4 9.500" /></svg>
                </HeadCell>
              </tr>
            </thead>
            {messages.map((m) => (
              <MessageRows key={m.subject} m={m} />
            ))}
          </Mail>
        </MessagePane>
      </Main>

      <Watermark>
        <WatermarkBadge>值</WatermarkBadge>
        什么值得买
      </Watermark>
      <Footing>
        <svg width="153" height="5" viewBox="0 0 153 5">
          <path d="M16 2.500H153V5H16Z" fill="#d5dfe9" />
          <path d="M0 3L17 0L19 5H0Z" fill="#f0663c" />
        </svg>
      </Footing>
    </Window>
  );
}
